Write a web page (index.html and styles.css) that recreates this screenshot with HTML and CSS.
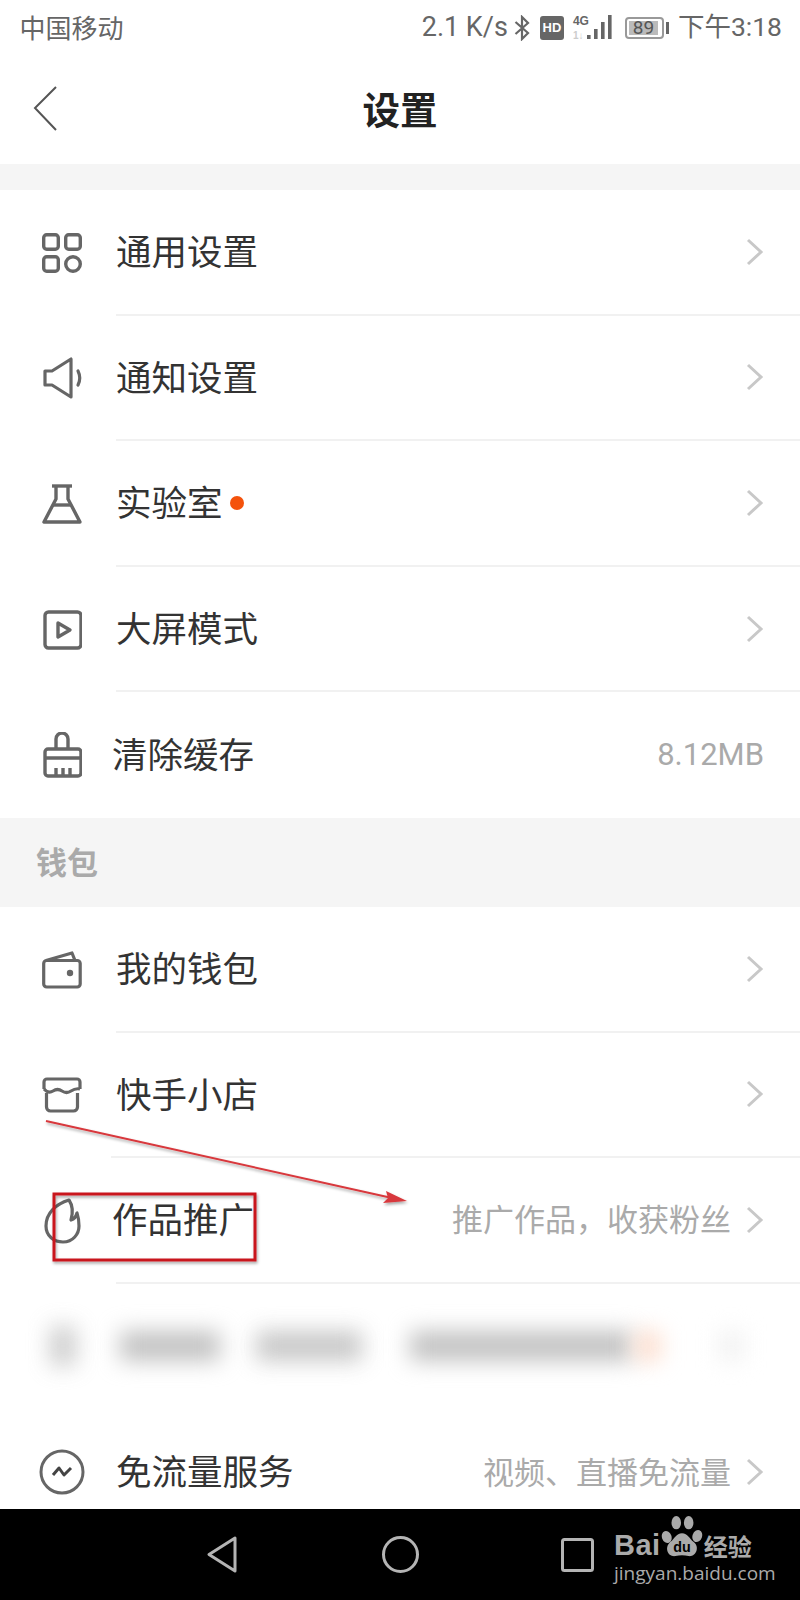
FILE: index.html
```html
<!DOCTYPE html>
<html lang="zh-CN">
<head>
<meta charset="utf-8">
<title>设置</title>
<link rel="stylesheet" href="styles.css">
</head>
<body>
<div class="phone">
  <div class="status">
    <span class="carrier">中国移动</span>
    <div class="status-right">
      <span class="speed">2.1 K/s</span>
      <svg class="bt" width="16" height="26" viewBox="0 0 16 26"><path d="M1.500 7 L14 18 L8 24 V2 L14 8 L1.500 19" fill="none" stroke="#666" stroke-width="2.200"/></svg>
      <span class="hd">HD</span>
      <span class="net">
        <span class="net-4g">4G</span>
        <span class="net-1">1↓</span>
      </span>
      <svg class="bars" width="25" height="25" viewBox="0 0 25 25"><g fill="#666"><rect x="0" y="20" width="3.600" height="4"/><rect x="7" y="14" width="3.600" height="10"/><rect x="14" y="7" width="3.600" height="17"/><rect x="21" y="0" width="3.600" height="24"/></g></svg>
      <span class="battery"><span class="battery-fill">89</span></span>
      <span class="nub"></span>
      <span class="clock">下午3:18</span>
    </div>
  </div>
  <header class="header">
    <svg class="back" width="25" height="45" viewBox="0 0 25 45"><path d="M23 1 L2 22 L23 44" fill="none" stroke="#555" stroke-width="2"/></svg>
    <h1 class="title">设置</h1>
  </header>
  <div class="content">
    <div class="gap"></div>

    <div class="row">
      <div class="icon"><svg width="40" height="40" viewBox="0 0 40 40"><g fill="none" stroke="#666" stroke-width="3.400"><rect x="1.700" y="1.700" width="14.600" height="14.600" rx="3"/><rect x="23.700" y="1.700" width="14.600" height="14.600" rx="3"/><rect x="1.700" y="23.700" width="14.600" height="14.600" rx="3"/><circle cx="31" cy="31" r="7.300"/></g></svg></div>
      <div class="body"><span class="label">通用设置</span><svg class="chev" width="18" height="28" viewBox="0 0 18 28"><path d="M2 2 L15 14 L2 26" fill="none" stroke="#c8c8c8" stroke-width="3"/></svg></div>
    </div>
    <div class="row">
      <div class="icon"><svg width="42" height="42" viewBox="0 0 42 42"><g fill="none" stroke="#666" stroke-width="3.200" stroke-linejoin="round" stroke-linecap="round"><path d="M3 14 H10 L29 2 V40 L10 28 H3 Z"/><path d="M36 14 Q39.500 21 36 28"/></g></svg></div>
      <div class="body"><span class="label">通知设置</span><svg class="chev" width="18" height="28" viewBox="0 0 18 28"><path d="M2 2 L15 14 L2 26" fill="none" stroke="#c8c8c8" stroke-width="3"/></svg></div>
    </div>
    <div class="row">
      <div class="icon"><svg width="40" height="40" viewBox="0 0 40 40"><g fill="none" stroke="#666" stroke-width="3.400" stroke-linejoin="round"><path d="M10 2 H30"/><path d="M14 2 V15 L2 38 H38 L26 15 V2"/><path d="M10 21 H30"/></g></svg></div>
      <div class="body"><span class="label">实验室</span><span class="dot"></span><span class="spacer"></span><svg class="chev" width="18" height="28" viewBox="0 0 18 28"><path d="M2 2 L15 14 L2 26" fill="none" stroke="#c8c8c8" stroke-width="3"/></svg></div>
    </div>
    <div class="row">
      <div class="icon"><svg width="40" height="40" viewBox="0 0 40 40"><g fill="none" stroke="#666" stroke-width="3.400" stroke-linejoin="round"><rect x="3" y="2" width="36" height="36" rx="3.500"/><path d="M16 13 L28 20 L16 27 Z"/></g></svg></div>
      <div class="body"><span class="label">大屏模式</span><svg class="chev" width="18" height="28" viewBox="0 0 18 28"><path d="M2 2 L15 14 L2 26" fill="none" stroke="#c8c8c8" stroke-width="3"/></svg></div>
    </div>
    <div class="row row-last">
      <div class="icon"><svg width="40" height="46" viewBox="0 0 40 46"><g fill="none" stroke="#666" stroke-width="3.400" stroke-linejoin="round"><path d="M14 17 V7 a6 6 0 0 1 12 0 V17"/><rect x="3" y="17" width="36" height="27" rx="3"/><path d="M3 26 H39"/><path d="M14 36 V44 M21 36 V44 M28 36 V44"/></g></svg></div>
      <div class="body"><span class="label label-tight">清除缓存</span><span class="value">8.12MB</span></div>
    </div>

    <div class="section"><span class="section-text">钱包</span></div>

    <div class="row">
      <div class="icon"><svg width="40" height="38" viewBox="0 0 40 38"><g fill="none" stroke="#666" stroke-width="3.200" stroke-linejoin="round"><rect x="1.700" y="9.500" width="36.500" height="26.500" rx="3"/><path d="M4 9.500 L30 2 L33 9.500"/></g><circle cx="28" cy="22" r="3.200" fill="#666"/></svg></div>
      <div class="body"><span class="label">我的钱包</span><svg class="chev" width="18" height="28" viewBox="0 0 18 28"><path d="M2 2 L15 14 L2 26" fill="none" stroke="#c8c8c8" stroke-width="3"/></svg></div>
    </div>
    <div class="row row-wide">
      <div class="icon"><svg width="40" height="36" viewBox="0 0 40 36"><g fill="none" stroke="#666" stroke-width="3.200" stroke-linejoin="round"><path d="M2 12 V5 a3 3 0 0 1 3-3 H35 a3 3 0 0 1 3 3 V12"/><path d="M2 12 Q6.500 17 11 14 T20 14 T29 14 T38 12"/><path d="M4.500 16 V30 a4 4 0 0 0 4 4 H31.500 a4 4 0 0 0 4-4 V16"/></g></svg></div>
      <div class="body"><span class="label">快手小店</span><svg class="chev" width="18" height="28" viewBox="0 0 18 28"><path d="M2 2 L15 14 L2 26" fill="none" stroke="#c8c8c8" stroke-width="3"/></svg></div>
    </div>
    <div class="row">
      <div class="icon"><svg width="40" height="46" viewBox="0 0 40 46"><path d="M27 2 C14 6 4 15 4 28 C4 38 12 44 21 44 C31 44 37 36 37 28 C37 23 36 18 35 15 C34 19 32 21 29 22 C31 15 31 8 27 2 Z" fill="none" stroke="#666" stroke-width="3.200" stroke-linejoin="round"/></svg></div>
      <div class="body"><span class="label label-tight">作品推广</span><span class="hint">推广作品，收获粉丝</span><svg class="chev" width="18" height="28" viewBox="0 0 18 28"><path d="M2 2 L15 14 L2 26" fill="none" stroke="#c8c8c8" stroke-width="3"/></svg></div>
    </div>
    <div class="blur-row">
      <span class="blob blob-icon"></span>
      <span class="blob blob-a"></span>
      <span class="blob blob-b"></span>
      <span class="blob blob-c"></span>
      <span class="blob blob-orange"></span>
      <span class="blob blob-chev"></span>
    </div>
    <div class="row row-last">
      <div class="icon icon-free"><svg width="46" height="46" viewBox="0 0 46 46"><circle cx="23" cy="23" r="21" fill="none" stroke="#666" stroke-width="3"/><path d="M14 26 L20 19 L25 26 L32 19" fill="none" stroke="#444" stroke-width="3" stroke-linejoin="round"/></svg></div>
      <div class="body"><span class="label">免流量服务</span><span class="hint">视频、直播免流量</span><svg class="chev" width="18" height="28" viewBox="0 0 18 28"><path d="M2 2 L15 14 L2 26" fill="none" stroke="#c8c8c8" stroke-width="3"/></svg></div>
    </div>
  </div>

  <nav class="nav">
    <svg width="30" height="37" viewBox="0 0 30 37"><path d="M28 2 V35 L2 18.500 Z" fill="none" stroke="#b4b4b4" stroke-width="3" stroke-linejoin="round"/></svg>
    <svg class="nav-home" width="37" height="37" viewBox="0 0 37 37"><circle cx="18.500" cy="18.500" r="17" fill="none" stroke="#b4b4b4" stroke-width="3"/></svg>
    <svg width="33" height="34" viewBox="0 0 33 34"><rect x="1.500" y="1.500" width="30" height="31" rx="2" fill="none" stroke="#b4b4b4" stroke-width="3"/></svg>
  </nav>

  <div class="mark">
    <div class="mark-top">
      <span class="mark-bai">Bai</span>
      <svg class="paw" width="42" height="46" viewBox="0 0 44 46">
        <g fill="#aaa"><ellipse cx="6" cy="23" rx="5" ry="6.500" transform="rotate(-20 6 23)"/><ellipse cx="16" cy="8" rx="5" ry="7"/><ellipse cx="29" cy="8" rx="5" ry="7"/><ellipse cx="38" cy="22" rx="5" ry="6.500" transform="rotate(20 38 22)"/><path d="M22 19 C28 19 30 25 34 28 C41 33 37 44 29 43 C24 42 20 42 15 43 C7 44 3 34 10 28 C14 25 16 19 22 19 Z"/></g>
        <text x="22" y="39" text-anchor="middle" class="paw-du">du</text>
      </svg>
      <span class="mark-cn">经验</span>
    </div>
    <div class="mark-url">jingyan.baidu.com</div>
  </div>

  <svg class="annot" width="800" height="1600" viewBox="0 0 800 1600">
    <defs><filter id="sh" x="-10%" y="-10%" width="120%" height="130%"><feDropShadow dx="1" dy="2" stdDeviation="1.500" flood-color="#000" flood-opacity="0.350"/></filter></defs>
    <g filter="url(#sh)">
      <path d="M46 1121 L392 1198" stroke="#d8383c" stroke-width="2" fill="none"/>
      <path d="M407 1201 L386 1191 L388 1198 L383 1203 Z" fill="#d8383c"/>
      <rect x="54" y="1194" width="201" height="66" fill="none" stroke="#c9191e" stroke-width="3"/>
    </g>
  </svg>
</div>
</body>
</html>
```
FILE: styles.css
```css
* { box-sizing: border-box; }
html, body { margin: 0; padding: 0; background: #fff; }
body { font-family: "Noto Sans CJK SC", "Noto Sans", sans-serif; }

.phone {
  position: relative;
  width: 800px;
  height: 1600px;
  display: flex;
  flex-direction: column;
  overflow: hidden;
  background: #fff;
}

/* status bar */
.status {
  height: 56px;
  flex: none;
  display: flex;
  align-items: center;
  justify-content: space-between;
  padding: 0 18px 1px 19.500px;
  color: #666;
}
.carrier { font-size: 26px; line-height: 1; font-weight: 400; margin-bottom: 2px; }
.status-right { display: flex; align-items: center; }
.speed { font-family: Roboto, sans-serif; font-size: 27px; line-height: 1; margin-right: 6px; }
.bt { margin-right: 10px; }
.hd {
  width: 24px; height: 24px; border-radius: 3px; background: #666; color: #fff;
  font: 700 13px/24px "Liberation Sans", sans-serif; text-align: center; margin-right: 9px;
}
.net { width: 14px; height: 26px; display: flex; flex-direction: column; align-items: flex-start; margin-right: 0; }
.net-4g { font: 700 12px/12px "Liberation Sans", sans-serif; color: #666; }
.net-1 { font: 700 10px/10px "Liberation Sans", sans-serif; color: #ccc; margin-top: 4px; }
.bars { margin-right: 13px; }
.battery {
  width: 39px; height: 22px; border: 2px solid #999; border-radius: 4px; padding: 2px;
  display: flex; margin-right: 2px;
}
.battery-fill {
  width: 29px; background: #bbb; color: #555; text-align: center;
  font: 400 19px/14px Roboto, sans-serif;
}
.nub { width: 3px; height: 12px; background: #666; margin-right: 9px; }
.clock { font-family: Roboto, "Noto Sans CJK SC", sans-serif; font-size: 26.500px; line-height: 1; }

/* header */
.header {
  position: relative;
  height: 108px;
  flex: none;
  display: flex;
  align-items: center;
  justify-content: center;
}
.back { position: absolute; left: 33px; top: 30px; }
.title { margin: 0 0 4px; font-size: 37.500px; line-height: 1; font-weight: 700; color: #222; }

/* list */
.content { flex: 1; min-height: 0; overflow: hidden; }
.gap { height: 26px; background: #f5f5f5; }
.section {
  height: 89px;
  background: #f5f5f5;
  color: #aaa;
  display: flex;
  align-items: center;
  padding: 0 0 4px 36px;
}
.section-text { font-size: 31px; font-weight: 700; line-height: 1; }
.row { height: 125.600px; display: flex; }
.icon {
  width: 116px;
  flex: none;
  padding-left: 42px;
  display: flex;
  align-items: center;
}
.icon-free { padding-left: 39px; }
.icon svg { display: block; }
.body {
  flex: 1;
  min-width: 0;
  display: flex;
  align-items: center;
  justify-content: space-between;
  padding-right: 36px;
  border-bottom: 2px solid #f1f1f1;
}
.row-last .body { border-bottom: 0; }
.row-wide .body { margin-left: -5px; }
.row-wide .body .label { margin-left: 5px; }
.label { font-size: 35.500px; line-height: 1; color: #333; font-weight: 400; margin-bottom: 4px; }
.label-tight { margin-left: -4px; }
.dot { width: 14px; height: 14px; border-radius: 50%; background: #f4520c; margin-left: 7px; }
.spacer { flex: 1; }
.chev { flex: none; }
.hint { margin-left: auto; margin-right: 15px; margin-bottom: 4px; font-size: 31px; line-height: 1; color: #aaa; }
.value { font-family: Roboto, sans-serif; font-size: 31px; line-height: 1; color: #aaa; margin-bottom: 2px; }

.blur-row {
  height: 125.600px;
  display: flex;
  align-items: center;
  padding: 0 0 2px 50px;
  overflow: hidden;
}
.blob { height: 30px; background: #c2c2c2; filter: blur(11px); flex: none; }
.blob-icon { width: 26px; height: 40px; opacity: .8; }
.blob-a { width: 100px; margin-left: 44px; }
.blob-b { width: 106px; margin-left: 36px; opacity: .9; }
.blob-c { width: 222px; margin-left: 48px; }
.blob-orange { width: 24px; background: #fcdccb; margin-left: 4px; }
.blob-chev { width: 22px; background: #f0f0f0; margin-left: 60px; }

/* nav bar */
.nav {
  height: 91px;
  flex: none;
  background: #000;
  display: flex;
  align-items: center;
  justify-content: center;
  gap: 144px;
  padding-left: 1px;
}
.nav svg { display: block; }
.nav-home { margin-left: 1px; margin-right: -2px; }

/* watermark */
.mark { position: absolute; left: 614px; top: 1514px; color: #aaa; }
.mark-top { display: flex; align-items: flex-end; height: 46px; }
.mark-bai { font: 700 29px/28px "Liberation Sans", sans-serif; margin-bottom: 1px; letter-spacing: 0.500px; }
.paw { margin-left: 0; display: block; }
.paw-du { font: 700 15px "Liberation Sans", sans-serif; fill: #000; }
.mark-cn { font-size: 24px; font-weight: 700; line-height: 28px; margin-left: 1px; }
.mark-url { font: 400 19px/20px "Open Sans", sans-serif; margin-top: 3px; white-space: nowrap; }

/* annotation overlay */
.annot { position: absolute; left: 0; top: 0; pointer-events: none; }
```
